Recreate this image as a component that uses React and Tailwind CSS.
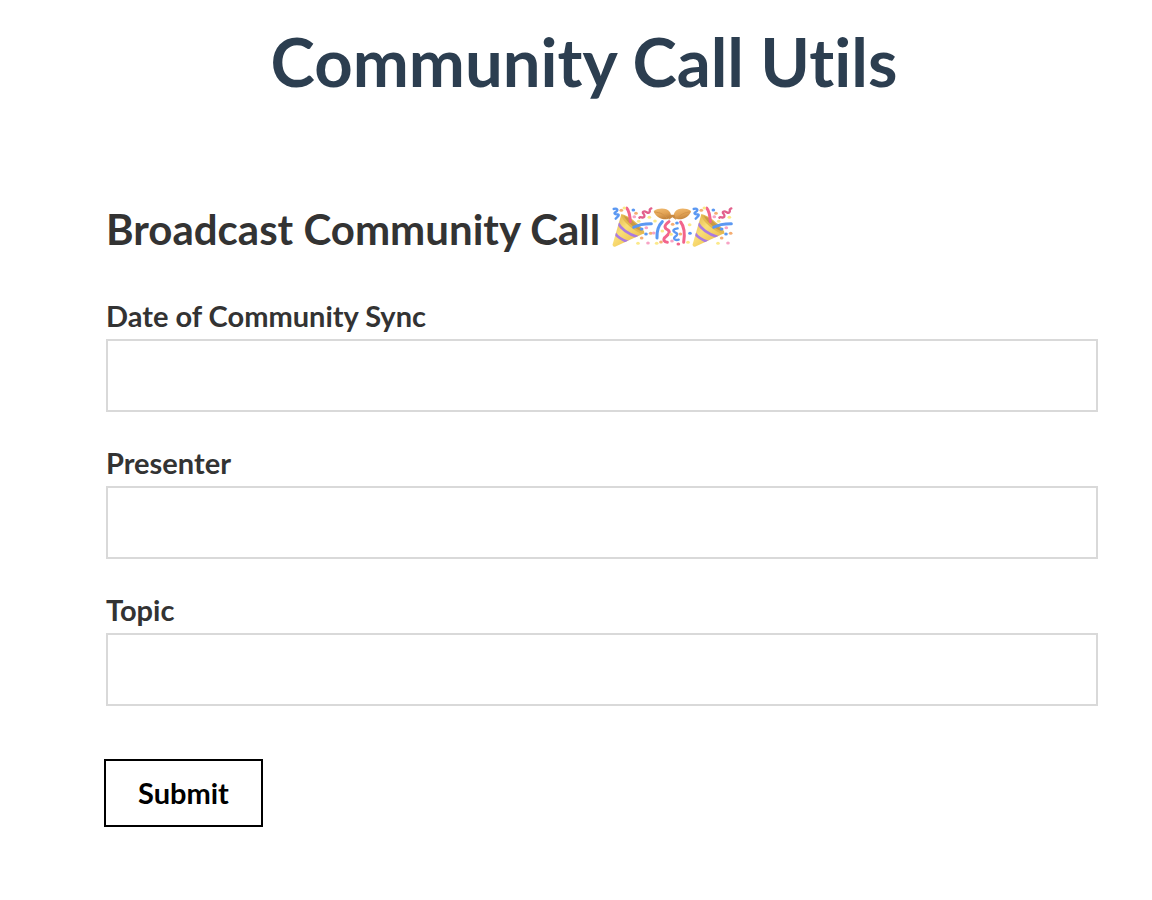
function Dots({ items }) {
  return items.map(([x, y, color]) => (
    <ellipse key={`${x}-${y}`} cx={x} cy={y} rx="5.5" ry="4.5" fill={color} />
  ));
}

const BLUE = "#5b98f2";
const PINK = "#f2648c";
const ORANGE = "#f5ad72";
const YELLOW = "#fbe98a";
const PALE_PINK = "#f7a3c4";

function Popper({ id }) {
  return (
    <svg viewBox="0 0 120 120" className="size-10 overflow-visible" aria-hidden="true">
      <defs>
        <linearGradient id={id} x1="0" y1="0" x2="1" y2="1">
          <stop offset="0" stopColor="#dcab45" />
          <stop offset="0.4" stopColor="#fadf78" />
          <stop offset="0.7" stopColor="#f0c85a" />
          <stop offset="1" stopColor="#cf9a3a" />
        </linearGradient>
        <clipPath id={`${id}-cone`}>
          <path d="M28 22Q62 34 97 79Q56 98 9 119Q1 121 2 112Z" />
        </clipPath>
      </defs>
      <path d="M28 22Q62 34 97 79Q56 98 9 119Q1 121 2 112Z" fill={`url(#${id})`} />
      <g clipPath={`url(#${id}-cone)`} fill="none" stroke="#a97be0" strokeWidth="8">
        <path d="M17 47Q33 77 79 91" />
        <path d="M6 76Q22 98 51 106" />
      </g>
      <path d="M28 22C46 22 91 58 97 75C98 84 85 81 69 70C48 57 26 34 28 22Z" fill="#e3b850" />
      <path d="M35 27C50 31 81 55 90 73C73 69 47 48 35 27Z" fill="#c99a44" />
      <g fill="none" strokeLinecap="round" strokeLinejoin="round" strokeWidth="9">
        <path d="M44 3C52 12 54 28 55 44" stroke={PINK} />
        <path d="M65 61C80 52 98 50 118 50" stroke={BLUE} />
        <path d="M82 32C86 27 93 36 97 29C101 21 88 19 94 14C101 9 107 22 112 16C117 10 108 8 118 4" stroke="#e2608c" strokeWidth="7" />
        <path d="M5 6C16 3 20 10 12 14C3 19 9 23 17 22C25 23 16 30 11 35" stroke={BLUE} strokeWidth="7" />
      </g>
      <Dots
        items={[
          [28, 10, ORANGE], [64, 9, BLUE], [72, 19, ORANGE], [67, 29, PALE_PINK],
          [80, 43, YELLOW], [89, 66, BLUE], [103, 62, PALE_PINK], [116, 79, ORANGE],
          [102, 81, BLUE], [89, 93, ORANGE], [108, 108, PALE_PINK], [78, 109, YELLOW],
          [112, 31, YELLOW], [37, 3, YELLOW],
        ]}
      />
    </svg>
  );
}

function ConfettiBall() {
  return (
    <svg viewBox="0 0 120 120" className="size-10 overflow-visible" aria-hidden="true">
      <defs>
        <linearGradient id="dome" x1="0" y1="0" x2="0.4" y2="1">
          <stop offset="0" stopColor="#f2bd72" />
          <stop offset="0.6" stopColor="#e2a355" />
          <stop offset="1" stopColor="#c4853d" />
        </linearGradient>
      </defs>
      <g fill="none" strokeLinecap="round" strokeLinejoin="round" strokeWidth="9">
        <path d="M31 44C18 57 14 73 15 93" stroke={BLUE} />
        <path d="M51 44C35 56 36 63 48 69C57 76 47 84 39 91C32 99 37 105 46 106" stroke={PINK} />
        <path d="M86 45C98 60 99 80 95 106" stroke={PINK} />
        <path d="M77 64C64 66 60 71 69 76C80 80 75 85 68 90C62 96 72 101 80 98" stroke={BLUE} strokeWidth="7" />
      </g>
      <g fill="url(#dome)">
        <path d="M5 12C22 1 44 3 53 14C60 23 57 36 43 37C26 38 8 27 5 12Z" />
        <path d="M117 12C100 1 78 3 69 14C62 23 65 36 79 37C96 38 114 27 117 12Z" />
      </g>
      <path d="M7 15C23 16 39 22 46 36M115 15C99 16 83 22 76 36" fill="none" stroke="#d3944a" strokeWidth="3" />
      <path d="M54 23L50 39L61 31L73 39L67 23Z" fill="#c98a42" />
      <Dots
        items={[
          [9, 42, YELLOW], [62, 52, ORANGE], [75, 48, BLUE], [31, 72, YELLOW],
          [5, 78, PALE_PINK], [27, 105, ORANGE], [14, 109, YELLOW], [60, 102, PALE_PINK],
          [85, 81, ORANGE], [113, 53, YELLOW], [114, 79, BLUE], [108, 106, YELLOW],
          [79, 111, PINK], [57, 82, YELLOW],
        ]}
      />
    </svg>
  );
}

function Field({ id, label }) {
  return (
    <div className="flex flex-col">
      <label htmlFor={id} className="text-[29px] leading-[46px]">{label}</label>
      <input
        id={id}
        name={id}
        type="text"
        className="h-[73px] w-full border-2 border-[#d9d9d9] bg-white px-4 text-[29px] outline-none focus:border-[#888888]"
      />
    </div>
  );
}

export default function App() {
  return (
    <main className="min-h-screen bg-white pt-5 pb-16 font-['Lato',sans-serif] font-bold text-[#333333] [font-variant-ligatures:none]">
      <h1 className="pl-4 text-center text-[67px] leading-[82px] text-[#2c3e50]">Community Call Utils</h1>
      <form className="mt-[102px] pr-[54px] pl-[106px]" onSubmit={(event) => event.preventDefault()}>
        <h2 className="flex items-center gap-3 text-[42px] leading-[50px]">
          Broadcast Community Call
          <span className="flex pb-1" role="img" aria-label="Party popper, confetti ball, party popper">
            <Popper id="popper-a" />
            <ConfettiBall />
            <Popper id="popper-b" />
          </span>
        </h2>
        <div className="mt-[39px] flex flex-col gap-7">
          <Field id="date" label="Date of Community Sync" />
          <Field id="presenter" label="Presenter" />
          <Field id="topic" label="Topic" />
        </div>
        <button type="submit" className="mt-[53px] -ml-0.5 h-[68px] border-2 border-black bg-white px-8 text-[29px] leading-[58px] text-black">
          Submit
        </button>
      </form>
    </main>
  );
}
